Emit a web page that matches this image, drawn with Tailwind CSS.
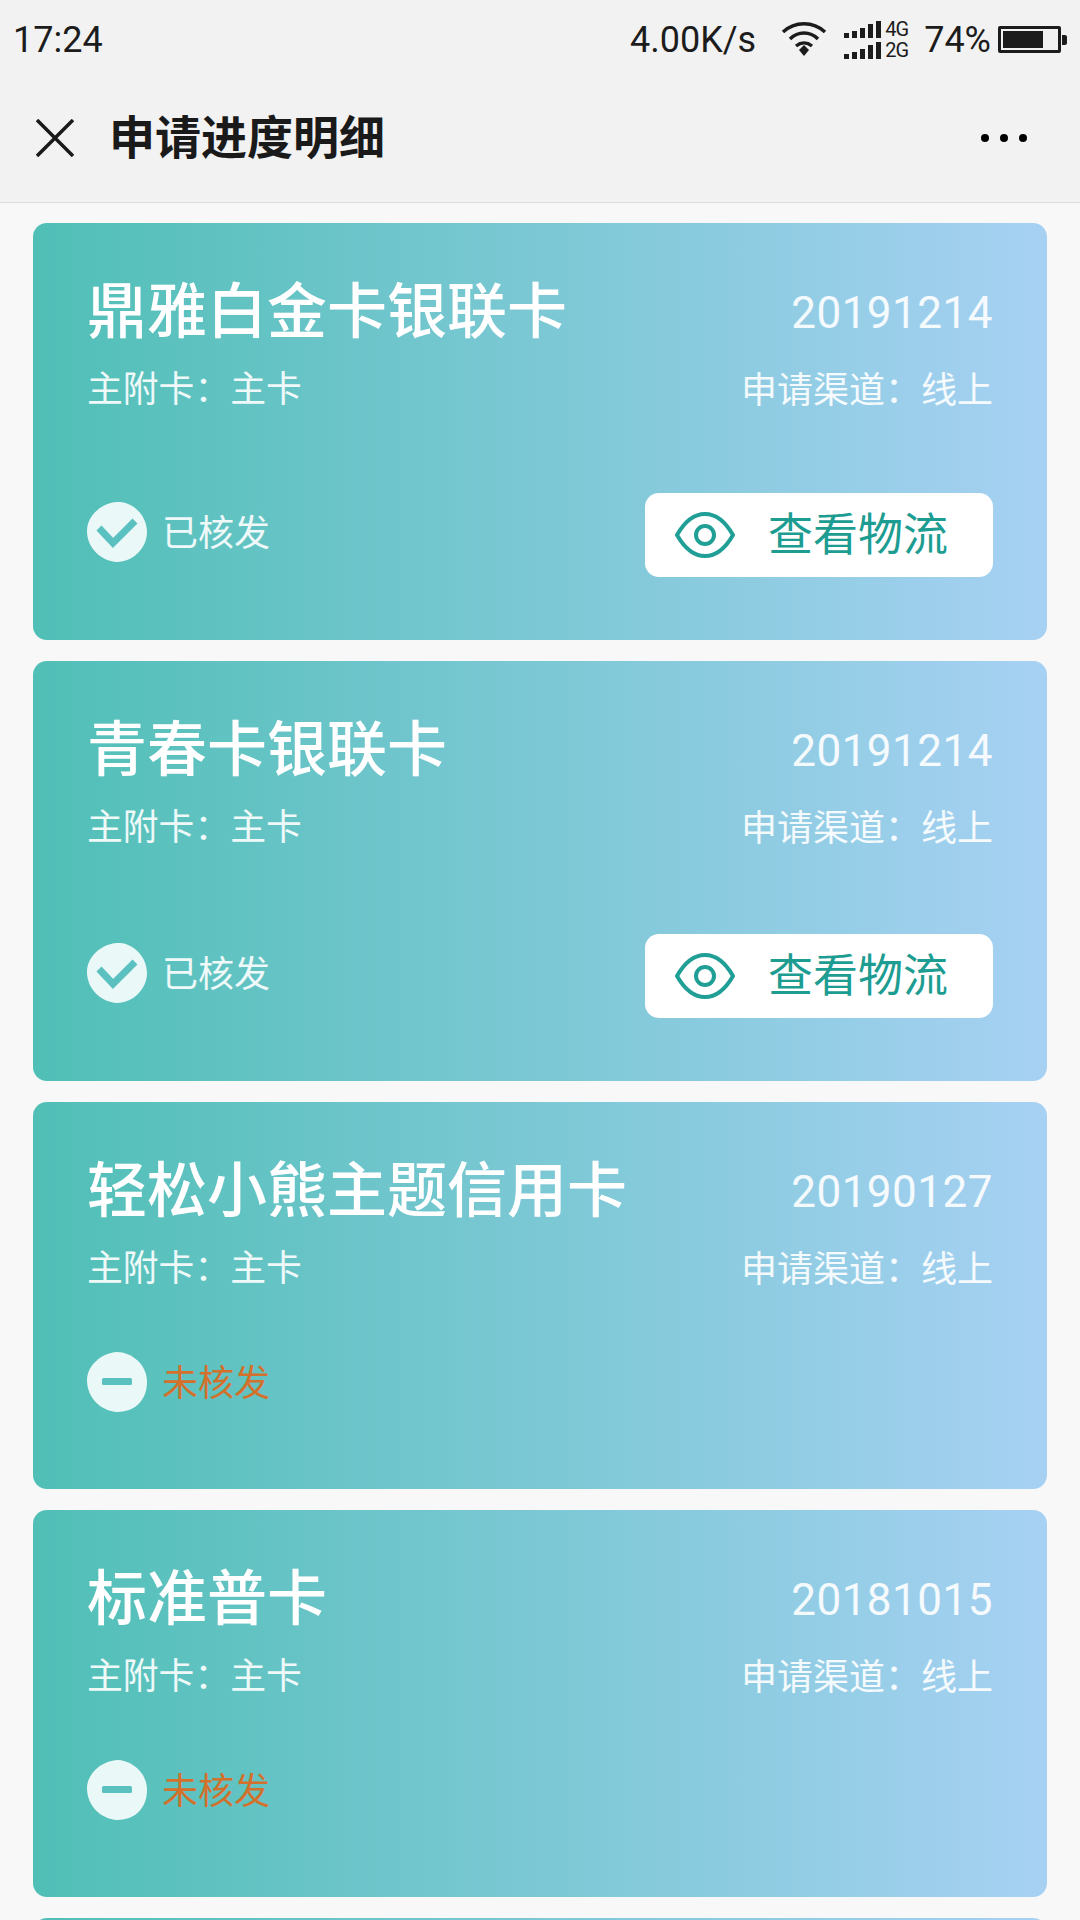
<!DOCTYPE html>
<html lang="zh-CN">
  <head>
    <meta charset="utf-8" />
    <meta name="viewport" content="width=device-width, initial-scale=1.0" />
    <title>申请进度明细</title>
    <script src="https://cdn.jsdelivr.net/npm/@tailwindcss/browser@4"></script>
  </head>
  <body class="w-[1080px] h-[1920px] overflow-hidden bg-[#f9f8f8] font-['Roboto','Noto_Sans_CJK_SC',sans-serif]">
    <!-- status bar + title bar -->
    <header class="h-[203px] bg-[#f2f2f2] border-b border-[#dcdcdc] text-[#1c1c1c]">
      <div class="h-[79px] flex items-center pl-[13px] pr-[13px] text-[36px]">
        <span class="leading-none">17:24</span>
        <span class="ml-auto leading-none">4.00K/s</span>
        <svg class="ml-[25px] -translate-y-[1px]" width="46" height="36" viewBox="0 0 46 36" fill="none" stroke="#1c1c1c" stroke-width="3.5">
          <path d="M2 11C14 0 32 0 44 11" />
          <path d="M9 18C17 10 29 10 37 18" />
          <path d="M15 25C20 21 26 21 31 25" />
          <path d="M18 29L23 24L28 29L23 35Z" fill="#1c1c1c" stroke="none" />
        </svg>
        <div class="ml-[17px] flex flex-col gap-[4px] w-[68px] h-[38px]">
          <div class="flex items-end gap-[3px] h-[17px]">
            <i class="block w-[5px] h-[5px] bg-[#1c1c1c]"></i><i class="block w-[5px] h-[7px] bg-[#1c1c1c]"></i><i class="block w-[5px] h-[10px] bg-[#1c1c1c]"></i><i class="block w-[5px] h-[14px] bg-[#1c1c1c]"></i><i class="block w-[5px] h-[17px] bg-[#1c1c1c]"></i>
            <span class="text-[20px] leading-[17px] tracking-[-1px] ml-[1px]">4G</span>
          </div>
          <div class="flex items-end gap-[3px] h-[17px]">
            <i class="block w-[5px] h-[5px] bg-[#1c1c1c]"></i><i class="block w-[5px] h-[7px] bg-[#1c1c1c]"></i><i class="block w-[5px] h-[10px] bg-[#1c1c1c]"></i><i class="block w-[5px] h-[14px] bg-[#1c1c1c]"></i><i class="block w-[5px] h-[17px] bg-[#1c1c1c]"></i>
            <span class="text-[20px] leading-[17px] tracking-[-1px] ml-[1px]">2G</span>
          </div>
        </div>
        <span class="ml-[12px] leading-none">74%</span>
        <div class="ml-[7px] flex items-center">
          <div class="w-[63px] h-[27px] border-[3px] border-[#1c1c1c] p-[2px] rounded-[2px]">
            <div class="w-[40px] h-full bg-[#1c1c1c]"></div>
          </div>
          <div class="ml-[1px] w-[5px] h-[10px] bg-[#1c1c1c] rounded-r-[2px]"></div>
        </div>
      </div>
      <div class="h-[123px] flex items-center pl-[36px] pr-[53px] pb-[6px]">
        <svg width="38" height="38" viewBox="0 0 38 38" fill="none" stroke="#1a1a1a" stroke-width="3.5">
          <path d="M1 1L37 37M37 1L1 37" />
        </svg>
        <h1 class="ml-[35px] text-[46px] leading-none font-bold text-[#1a1a1a]">申请进度明细</h1>
        <div class="ml-auto flex gap-[11px]">
          <i class="block w-[8px] h-[8px] rounded-full bg-black"></i><i class="block w-[8px] h-[8px] rounded-full bg-black"></i><i class="block w-[8px] h-[8px] rounded-full bg-black"></i>
        </div>
      </div>
    </header>

    <main class="h-[1717px] overflow-hidden flex flex-col gap-[21px] px-[33px] pt-[20px]">
      <!-- card 1 -->
      <section class="h-[417px] shrink-0 rounded-[14px] bg-[linear-gradient(90deg,#50bfb6,#a7d1f3)] pt-[60px] px-[54px] text-white">
        <div class="flex items-center justify-between h-[60px]">
          <h2 class="text-[60px] leading-none font-medium">鼎雅白金卡银联卡</h2>
          <span class="text-[44px] leading-none tracking-[0.5px] text-white/90">20191214</span>
        </div>
        <div class="mt-[26px] flex items-center justify-between h-[44px] text-[36px] leading-none text-white/90">
          <span class="text-[35.8px]">主附卡：主卡</span><span>申请渠道：线上</span>
        </div>
        <div class="mt-[77px] flex items-start justify-between">
          <div class="mt-[12px] flex items-center">
            <svg width="60" height="60" viewBox="0 0 60 60"><path d="M30 0C44 -1 60 12 60 30C60 46 46 60 30 60C14 59 0 46 0 29C0 14 14 1 30 0Z" fill="#ebf8f8" /><path d="M12 26L26 41L48 19" fill="none" stroke="#5bc0c0" stroke-width="7" /></svg>
            <span class="ml-[15px] mt-[4px] text-[36px] leading-none text-white/90">已核发</span>
          </div>
          <a class="mt-[3px] w-[348px] h-[84px] rounded-[14px] bg-white flex items-center pl-[30px] text-[#1d9d92]">
            <svg width="60" height="46" viewBox="0 0 60 46" fill="none" stroke="#1f9f96" stroke-width="4"><path d="M2 23C10 9 20 2 30 2C40 2 50 9 58 23C50 37 40 44 30 44C20 44 10 37 2 23Z" /><circle cx="30" cy="23" r="9" /></svg>
            <span class="ml-[33px] text-[45px] leading-none">查看物流</span>
          </a>
        </div>
      </section>

      <!-- card 2 -->
      <section class="h-[420px] shrink-0 rounded-[14px] bg-[linear-gradient(90deg,#50bfb6,#a7d1f3)] pt-[60px] px-[54px] text-white">
        <div class="flex items-center justify-between h-[60px]">
          <h2 class="text-[60px] leading-none font-medium">青春卡银联卡</h2>
          <span class="text-[44px] leading-none tracking-[0.5px] text-white/90">20191214</span>
        </div>
        <div class="mt-[26px] flex items-center justify-between h-[44px] text-[36px] leading-none text-white/90">
          <span class="text-[35.8px]">主附卡：主卡</span><span>申请渠道：线上</span>
        </div>
        <div class="mt-[80px] flex items-start justify-between">
          <div class="mt-[12px] flex items-center">
            <svg width="60" height="60" viewBox="0 0 60 60"><path d="M30 0C44 -1 60 12 60 30C60 46 46 60 30 60C14 59 0 46 0 29C0 14 14 1 30 0Z" fill="#ebf8f8" /><path d="M12 26L26 41L48 19" fill="none" stroke="#5bc0c0" stroke-width="7" /></svg>
            <span class="ml-[15px] mt-[4px] text-[36px] leading-none text-white/90">已核发</span>
          </div>
          <a class="mt-[3px] w-[348px] h-[84px] rounded-[14px] bg-white flex items-center pl-[30px] text-[#1d9d92]">
            <svg width="60" height="46" viewBox="0 0 60 46" fill="none" stroke="#1f9f96" stroke-width="4"><path d="M2 23C10 9 20 2 30 2C40 2 50 9 58 23C50 37 40 44 30 44C20 44 10 37 2 23Z" /><circle cx="30" cy="23" r="9" /></svg>
            <span class="ml-[33px] text-[45px] leading-none">查看物流</span>
          </a>
        </div>
      </section>

      <!-- card 3 -->
      <section class="h-[387px] shrink-0 rounded-[14px] bg-[linear-gradient(90deg,#50bfb6,#a7d1f3)] pt-[60px] px-[54px] text-white">
        <div class="flex items-center justify-between h-[60px]">
          <h2 class="text-[60px] leading-none font-medium">轻松小熊主题信用卡</h2>
          <span class="text-[44px] leading-none tracking-[0.5px] text-white/90">20190127</span>
        </div>
        <div class="mt-[26px] flex items-center justify-between h-[44px] text-[36px] leading-none text-white/90">
          <span class="text-[35.8px]">主附卡：主卡</span><span>申请渠道：线上</span>
        </div>
        <div class="mt-[60px] flex items-center h-[60px]">
          <svg width="60" height="60" viewBox="0 0 60 60"><path d="M30 0C44 0 60 12 60 30C60 46 50 60 30 60C14 59 0 46 0 28C0 14 14 1 30 0Z" fill="#ebf8f8" /><rect x="15" y="26" width="30" height="7" rx="1.5" fill="#5bc0c0" /></svg>
          <span class="ml-[15px] mt-[4px] text-[36px] leading-none text-[#d2702c]">未核发</span>
        </div>
      </section>

      <!-- card 4 -->
      <section class="h-[387px] shrink-0 rounded-[14px] bg-[linear-gradient(90deg,#50bfb6,#a7d1f3)] pt-[60px] px-[54px] text-white">
        <div class="flex items-center justify-between h-[60px]">
          <h2 class="text-[60px] leading-none font-medium">标准普卡</h2>
          <span class="text-[44px] leading-none tracking-[0.5px] text-white/90">20181015</span>
        </div>
        <div class="mt-[26px] flex items-center justify-between h-[44px] text-[36px] leading-none text-white/90">
          <span class="text-[35.8px]">主附卡：主卡</span><span>申请渠道：线上</span>
        </div>
        <div class="mt-[60px] flex items-center h-[60px]">
          <svg width="60" height="60" viewBox="0 0 60 60"><path d="M30 0C44 0 60 12 60 30C60 46 50 60 30 60C14 59 0 46 0 28C0 14 14 1 30 0Z" fill="#ebf8f8" /><rect x="15" y="26" width="30" height="7" rx="1.5" fill="#5bc0c0" /></svg>
          <span class="ml-[15px] mt-[4px] text-[36px] leading-none text-[#d2702c]">未核发</span>
        </div>
      </section>

      <!-- card 5, cut off by the screen edge -->
      <section class="h-[387px] shrink-0 rounded-[14px] bg-[linear-gradient(90deg,#50bfb6,#a7d1f3)]"></section>
    </main>
  </body>
</html>
